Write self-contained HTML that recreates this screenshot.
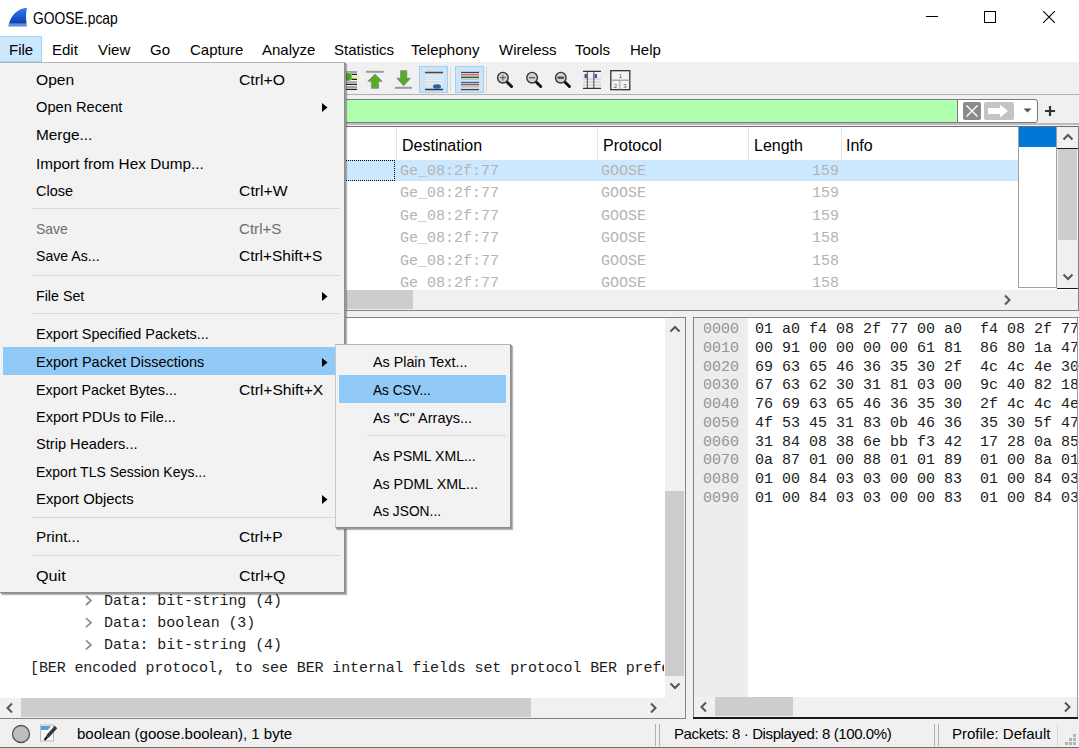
<!DOCTYPE html>
<html><head><meta charset="utf-8">
<style>
*{margin:0;padding:0;box-sizing:border-box}
html,body{width:1079px;height:748px;overflow:hidden;background:#fff}
body{position:relative;font-family:"Liberation Sans",sans-serif;font-size:15px;color:#000}
.a{position:absolute}
.t{position:absolute;white-space:nowrap;line-height:20px;transform-origin:0 0}
.m{font-family:"Liberation Mono",monospace;font-size:15px;color:#1c1c1c}
.tr{letter-spacing:-0.11px}
.mn .t{letter-spacing:0}
.pl{color:#b4b4b4}
.off{color:#949494}
.sep{left:32px;width:308px;height:1px;background:#d7d7d7}
.dis{color:#6d6d6d}
.hd{font-size:16px}
</style></head><body>
<!-- title bar -->
<svg class="a" style="left:8px;top:7px" width="20" height="20" viewBox="0 0 20 20">
 <defs><linearGradient id="fin" x1="0" y1="0" x2="0" y2="1"><stop offset="0" stop-color="#2f7ee8"/><stop offset="0.8" stop-color="#1140b8"/><stop offset="0.86" stop-color="#6a92d8"/><stop offset="1" stop-color="#5b86cf"/></linearGradient></defs>
 <path d="M19 0.8C10 1.5 2.5 8 0.2 19.6L19 19.6C17.8 13 17.6 6 19 0.8Z" fill="url(#fin)"/>
</svg>
<div class="t" style="left:33px;top:8px;font-size:16.5px;transform:scaleX(0.84)">GOOSE.pcap</div>
<div class="a" style="left:926px;top:16px;width:12px;height:1px;background:#000"></div>
<div class="a" style="left:984px;top:11px;width:12px;height:12px;border:1px solid #000"></div>
<svg class="a" style="left:1043px;top:11px" width="12" height="12"><path d="M0 0L12 12M12 0L0 12" stroke="#000" stroke-width="1.1"/></svg>

<!-- menubar -->
<div class="a" style="left:0;top:36px;width:42px;height:26px;background:#cce8ff;border:1px solid #a4d4fa;border-left:none"></div>
<div class="t" style="left:9px;top:40px">File</div>
<div class="t" style="left:52px;top:40px">Edit</div>
<div class="t" style="left:98px;top:40px">View</div>
<div class="t" style="left:150px;top:40px">Go</div>
<div class="t" style="left:190px;top:40px">Capture</div>
<div class="t" style="left:262px;top:40px">Analyze</div>
<div class="t" style="left:334px;top:40px">Statistics</div>
<div class="t" style="left:411px;top:40px">Telephony</div>
<div class="t" style="left:499px;top:40px">Wireless</div>
<div class="t" style="left:575px;top:40px">Tools</div>
<div class="t" style="left:630px;top:40px">Help</div>

<!-- toolbar -->
<div class="a" style="left:0;top:62px;width:1079px;height:33px;background:#f0f0f0;border-bottom:1px solid #b0b0b0"></div>
<svg class="a" style="left:340px;top:62px" width="310" height="33">
 <!-- partial icon (go to packet) -->
 <path d="M5.3 12.4H17M5.3 17.3H17M5.3 22.4H17M5.3 27.4H17" stroke="#1e1e1e" stroke-width="1.4"/>
 <path d="M5.3 10H17M5.3 20.1H17M5.3 25H17" stroke="#8a8a8a" stroke-width="1.4"/>
 <circle cx="7.7" cy="14.9" r="4.3" fill="#4aa520" stroke="#b8e0a0" stroke-width="0.8"/>
 <path d="M12.5 15.4H19" stroke="#eef080" stroke-width="2.2"/>
 <!-- first packet -->
 <path d="M26 9.8H43.7" stroke="#9a9a9a" stroke-width="2"/>
 <path d="M35 12.2L42.2 19.3H38.6V26.3H31.4V19.3H27.8Z" fill="#52b020" stroke="#8a8a8a" stroke-width="0.9"/>
 <!-- last packet -->
 <path d="M55 25.8H72" stroke="#9a9a9a" stroke-width="2"/>
 <path d="M63.7 23.7L70.6 16.3H66.8V8.7H60.6V16.3H56.8Z" fill="#52b020" stroke="#8a8a8a" stroke-width="0.9"/>
 <!-- autoscroll button -->
 <rect x="79.5" y="4.5" width="28" height="26" fill="#cce4f7" stroke="#a6cdeb"/>
 <path d="M85 10.5H103" stroke="#444" stroke-width="1.5"/>
 <path d="M85 13.5H103M85 16H103M85 18.5H103M85 21.5H103M85 24H103" stroke="#f4ecdc" stroke-width="1"/>
 <path d="M85 27.5H103" stroke="#333" stroke-width="1.5"/>
 <ellipse cx="97" cy="24.5" rx="4" ry="2.2" fill="#2a5ea8"/>
 <path d="M110.5 5V30" stroke="#d8d8d8"/>
 <!-- colorize button -->
 <rect x="115.5" y="4.5" width="28" height="26" fill="#cce4f7" stroke="#a6cdeb"/>
 <path d="M121 10.5H139" stroke="#444" stroke-width="1.3"/>
 <path d="M121 12.8H139" stroke="#e06050" stroke-width="1.3"/>
 <path d="M121 15.3H139" stroke="#445" stroke-width="1.3"/>
 <path d="M121 17.3H139" stroke="#a8d890" stroke-width="1.3"/>
 <path d="M121 20.5H139" stroke="#556" stroke-width="1.3"/>
 <path d="M121 22.6H139" stroke="#7a5a8a" stroke-width="1.3"/>
 <path d="M121 24.7H139" stroke="#d8c070" stroke-width="1.3"/>
 <path d="M121 27.6H139" stroke="#444" stroke-width="1.3"/>
 <path d="M146.5 5V30" stroke="#d8d8d8"/>
 <!-- zoom in/out/normal -->
 <g stroke="#333" fill="#d0d0d0" stroke-width="1.4">
  <circle cx="162.9" cy="15.7" r="5.3"/>
  <circle cx="192.1" cy="15.7" r="5.3"/>
  <circle cx="220.8" cy="15.7" r="5.3"/>
 </g>
 <g stroke="#111" stroke-width="3" stroke-linecap="round">
  <path d="M167.5 20.5L171.5 24.5M196.7 20.5L200.7 24.5M225.4 20.5L229.4 24.5"/>
 </g>
 <path d="M160 15.7H166M162.9 12.8V18.6" stroke="#555" stroke-width="1"/>
 <path d="M189 15.7H195" stroke="#555" stroke-width="1.2"/>
 <path d="M217.5 15.7H224" stroke="#444" stroke-width="2.2"/>
 <!-- resize columns -->
 <path d="M243 9.4H261M243 26.4H261" stroke="#333" stroke-width="1.2"/>
 <path d="M243 17H261M243 20H261M243 23H261" stroke="#c8c8c8" stroke-width="1"/>
 <path d="M247.3 9.4V26.4M253.8 9.4V26.4" stroke="#333" stroke-width="0.9"/>
 <rect x="244.5" y="12" width="2.5" height="4" fill="#3a5a9a"/>
 <rect x="254.5" y="12" width="2.5" height="4" fill="#3a5a9a"/>
 <!-- layout -->
 <rect x="270.8" y="8.7" width="19" height="19" fill="#f4f4f4" stroke="#222" stroke-width="1.2"/>
 <path d="M270.8 18.2H289.8" stroke="#999" stroke-width="1.2"/>
 <path d="M279.9 18.2V27.7" stroke="#999" stroke-width="1"/>
 <text x="280.3" y="16" font-size="6" text-anchor="middle" fill="#555" font-family="Liberation Sans">1</text>
 <text x="275.5" y="25.5" font-size="6" text-anchor="middle" fill="#555" font-family="Liberation Sans">2</text>
 <text x="285" y="25.5" font-size="6" text-anchor="middle" fill="#555" font-family="Liberation Sans">3</text>
</svg>

<!-- filter bar -->
<div class="a" style="left:0;top:95px;width:1079px;height:31px;background:#f0f0f0"></div>
<div class="a" style="left:0;top:99px;width:1038px;height:24px;background:#fff;border:1px solid #7a7a7a;border-radius:3px"></div>
<div class="a" style="left:1px;top:100px;width:957px;height:22px;background:#afffaf;border-right:1px solid #7a7a7a"></div>
<div class="a" style="left:0;top:123px;width:1079px;height:2px;background:#bdbac0"></div>
<svg class="a" style="left:962px;top:101px" width="60" height="20">
 <rect x="1" y="1" width="18" height="18" rx="2" fill="#8a8a8a"/>
 <path d="M4.5 4.5L15.5 15.5M15.5 4.5L4.5 15.5" stroke="#fff" stroke-width="1.4"/>
 <rect x="22" y="1" width="30" height="18" rx="2" fill="#c4c4c4"/>
 <path d="M26 7H38V3.5L46 10L38 16.5V13H26Z" fill="#fff"/>
</svg>
<svg class="a" style="left:1022px;top:107px" width="12" height="8"><path d="M1.5 1.5H9.5L5.5 5.5Z" fill="#555"/></svg>
<svg class="a" style="left:1043px;top:104px" width="14" height="14"><path d="M7 2V12M2 7H12" stroke="#333" stroke-width="2.2"/></svg>

<!-- packet list -->
<div class="a" style="left:0;top:126px;width:1079px;height:1px;background:#6e6e6e"></div>
<div class="a" style="left:1019px;top:127px;width:37px;height:20px;background:#0078d7"></div>
<div class="a" style="left:1018px;top:127px;width:39px;height:161px;border:1px solid #a0a0a0;border-top:none"></div>
<div class="a" style="left:396px;top:127px;width:1px;height:33px;background:#e5e5e5"></div>
<div class="a" style="left:597px;top:127px;width:1px;height:33px;background:#e5e5e5"></div>
<div class="a" style="left:748px;top:127px;width:1px;height:33px;background:#e5e5e5"></div>
<div class="a" style="left:841px;top:127px;width:1px;height:33px;background:#e5e5e5"></div>
<div class="t hd" style="left:402px;top:136px">Destination</div>
<div class="t hd" style="left:603px;top:136px">Protocol</div>
<div class="t hd" style="left:754px;top:136px">Length</div>
<div class="t hd" style="left:846px;top:136px">Info</div>
<div class="a" style="left:0;top:160px;width:1018px;height:21px;background:#cce8ff"></div>
<div class="a" style="left:340px;top:160px;width:55px;height:21px;border:1px dotted #000;border-left:none"></div>
<div class="a" style="left:0;top:127px;width:1018px;height:160px;overflow:hidden"><div class="t m pl" style="left:400px;top:35px">Ge_08:2f:77</div>
<div class="t m pl" style="left:601px;top:35px">GOOSE</div>
<div class="t m pl" style="left:812px;top:35px;width:27px;text-align:right">159</div>
<div class="t m pl" style="left:400px;top:57px">Ge_08:2f:77</div>
<div class="t m pl" style="left:601px;top:57px">GOOSE</div>
<div class="t m pl" style="left:812px;top:57px;width:27px;text-align:right">159</div>
<div class="t m pl" style="left:400px;top:80px">Ge_08:2f:77</div>
<div class="t m pl" style="left:601px;top:80px">GOOSE</div>
<div class="t m pl" style="left:812px;top:80px;width:27px;text-align:right">159</div>
<div class="t m pl" style="left:400px;top:102px">Ge_08:2f:77</div>
<div class="t m pl" style="left:601px;top:102px">GOOSE</div>
<div class="t m pl" style="left:812px;top:102px;width:27px;text-align:right">158</div>
<div class="t m pl" style="left:400px;top:125px">Ge_08:2f:77</div>
<div class="t m pl" style="left:601px;top:125px">GOOSE</div>
<div class="t m pl" style="left:812px;top:125px;width:27px;text-align:right">158</div>
<div class="t m pl" style="left:400px;top:147px">Ge_08:2f:77</div>
<div class="t m pl" style="left:601px;top:147px">GOOSE</div>
<div class="t m pl" style="left:812px;top:147px;width:27px;text-align:right">158</div></div>
<!-- packet list v-scroll -->
<div class="a" style="left:1057px;top:127px;width:21px;height:161px;background:#f0f0f0"></div>
<div class="a" style="left:1058px;top:149px;width:19px;height:91px;background:#cdcdcd"></div>
<div class="a" style="left:1057px;top:148px;width:21px;height:1px;background:#1a1a1a"></div>
<div class="a" style="left:1057px;top:288px;width:21px;height:1px;background:#1a1a1a"></div>
<svg class="a" style="left:1061px;top:131px" width="14" height="12"><path d="M2.5 8.5L7 4L11.5 8.5" fill="none" stroke="#555" stroke-width="2"/></svg>
<svg class="a" style="left:1061px;top:271px" width="14" height="12"><path d="M2.5 3.5L7 8L11.5 3.5" fill="none" stroke="#555" stroke-width="2"/></svg>
<!-- packet list h-scroll -->
<div class="a" style="left:0;top:290px;width:1078px;height:20px;background:#f0f0f0"></div>
<div class="a" style="left:0;top:290px;width:413px;height:19px;background:#cdcdcd"></div>
<svg class="a" style="left:1000px;top:293px" width="14" height="14"><path d="M5 2.5L9.5 7L5 11.5" fill="none" stroke="#555" stroke-width="2"/></svg>
<div class="a" style="left:1078px;top:126px;width:1px;height:184px;background:#808080"></div>

<!-- splitter -->
<div class="a" style="left:0;top:310px;width:1079px;height:7px;background:#f0f0f0;border-top:1px solid #858585"></div>
<div class="a" style="left:686px;top:317px;width:7px;height:402px;background:#f0f0f0"></div>

<!-- details pane -->
<div class="a" style="left:0;top:317px;width:686px;height:402px;background:#fff;border-top:1px solid #858585;border-right:1px solid #858585"></div>
<div class="a" style="left:665px;top:318px;width:20px;height:380px;background:#f0f0f0"></div>
<div class="a" style="left:665px;top:491px;width:19px;height:185px;background:#cdcdcd"></div>
<svg class="a" style="left:668px;top:323px" width="14" height="12"><path d="M2.5 8.5L7 4L11.5 8.5" fill="none" stroke="#555" stroke-width="2"/></svg>
<svg class="a" style="left:668px;top:680px" width="14" height="12"><path d="M2.5 3.5L7 8L11.5 3.5" fill="none" stroke="#555" stroke-width="2"/></svg>
<div class="a" style="left:0;top:698px;width:685px;height:20px;background:#f0f0f0"></div>
<div class="a" style="left:21px;top:698px;width:510px;height:19px;background:#cdcdcd"></div>
<svg class="a" style="left:3px;top:701px" width="14" height="14"><path d="M9 2.5L4.5 7L9 11.5" fill="none" stroke="#555" stroke-width="2"/></svg>
<svg class="a" style="left:646px;top:701px" width="14" height="14"><path d="M5 2.5L9.5 7L5 11.5" fill="none" stroke="#555" stroke-width="2"/></svg>
<div class="a" style="left:0;top:718px;width:686px;height:1px;background:#828282"></div>
<svg class="a" style="left:84px;top:594px" width="10" height="60"><path d="M2 2L7 6.5L2 11M2 24.2L7 28.7L2 33.2M2 46.4L7 50.9L2 55.4" fill="none" stroke="#8c8c8c" stroke-width="1.7"/></svg>
<div class="t m tr" style="left:104px;top:592px">Data:&nbsp;bit-string&nbsp;(4)</div>
<div class="t m tr" style="left:104px;top:614px">Data:&nbsp;boolean&nbsp;(3)</div>
<div class="t m tr" style="left:104px;top:636px">Data:&nbsp;bit-string&nbsp;(4)</div>
<div class="a" style="left:0;top:657px;width:664px;height:26px;overflow:hidden"><div class="t m tr" style="left:30px;top:2px">[BER&nbsp;encoded&nbsp;protocol,&nbsp;to&nbsp;see&nbsp;BER&nbsp;internal&nbsp;fields&nbsp;set&nbsp;protocol&nbsp;BER&nbsp;preferences]</div></div>

<!-- bytes pane -->
<div class="a" style="left:693px;top:317px;width:386px;height:402px;background:#fff;border-top:1px solid #858585;border-left:1px solid #858585"></div>
<div class="a" style="left:694px;top:318px;width:54px;height:380px;background:#ededed"></div>
<div class="t m off" style="left:703px;top:320px">0000</div>
<div class="t m" style="left:755px;top:320px">01&nbsp;a0&nbsp;f4&nbsp;08&nbsp;2f&nbsp;77&nbsp;00&nbsp;a0&nbsp;&nbsp;f4&nbsp;08&nbsp;2f&nbsp;77</div>
<div class="t m off" style="left:703px;top:339px">0010</div>
<div class="t m" style="left:755px;top:339px">00&nbsp;91&nbsp;00&nbsp;00&nbsp;00&nbsp;00&nbsp;61&nbsp;81&nbsp;&nbsp;86&nbsp;80&nbsp;1a&nbsp;47</div>
<div class="t m off" style="left:703px;top:358px">0020</div>
<div class="t m" style="left:755px;top:358px">69&nbsp;63&nbsp;65&nbsp;46&nbsp;36&nbsp;35&nbsp;30&nbsp;2f&nbsp;&nbsp;4c&nbsp;4c&nbsp;4e&nbsp;30</div>
<div class="t m off" style="left:703px;top:376px">0030</div>
<div class="t m" style="left:755px;top:376px">67&nbsp;63&nbsp;62&nbsp;30&nbsp;31&nbsp;81&nbsp;03&nbsp;00&nbsp;&nbsp;9c&nbsp;40&nbsp;82&nbsp;18</div>
<div class="t m off" style="left:703px;top:395px">0040</div>
<div class="t m" style="left:755px;top:395px">76&nbsp;69&nbsp;63&nbsp;65&nbsp;46&nbsp;36&nbsp;35&nbsp;30&nbsp;&nbsp;2f&nbsp;4c&nbsp;4c&nbsp;4e</div>
<div class="t m off" style="left:703px;top:414px">0050</div>
<div class="t m" style="left:755px;top:414px">4f&nbsp;53&nbsp;45&nbsp;31&nbsp;83&nbsp;0b&nbsp;46&nbsp;36&nbsp;&nbsp;35&nbsp;30&nbsp;5f&nbsp;47</div>
<div class="t m off" style="left:703px;top:433px">0060</div>
<div class="t m" style="left:755px;top:433px">31&nbsp;84&nbsp;08&nbsp;38&nbsp;6e&nbsp;bb&nbsp;f3&nbsp;42&nbsp;&nbsp;17&nbsp;28&nbsp;0a&nbsp;85</div>
<div class="t m off" style="left:703px;top:451px">0070</div>
<div class="t m" style="left:755px;top:451px">0a&nbsp;87&nbsp;01&nbsp;00&nbsp;88&nbsp;01&nbsp;01&nbsp;89&nbsp;&nbsp;01&nbsp;00&nbsp;8a&nbsp;01</div>
<div class="t m off" style="left:703px;top:470px">0080</div>
<div class="t m" style="left:755px;top:470px">01&nbsp;00&nbsp;84&nbsp;03&nbsp;03&nbsp;00&nbsp;00&nbsp;83&nbsp;&nbsp;01&nbsp;00&nbsp;84&nbsp;03</div>
<div class="t m off" style="left:703px;top:489px">0090</div>
<div class="t m" style="left:755px;top:489px">01&nbsp;00&nbsp;84&nbsp;03&nbsp;03&nbsp;00&nbsp;00&nbsp;83&nbsp;&nbsp;01&nbsp;00&nbsp;84&nbsp;03</div>
<div class="a" style="left:694px;top:697px;width:385px;height:20px;background:#f0f0f0"></div>
<div class="a" style="left:715px;top:697px;width:78px;height:19px;background:#cdcdcd"></div>
<svg class="a" style="left:697px;top:700px" width="14" height="14"><path d="M9 2.5L4.5 7L9 11.5" fill="none" stroke="#555" stroke-width="2"/></svg>
<svg class="a" style="left:1060px;top:700px" width="14" height="14"><path d="M5 2.5L9.5 7L5 11.5" fill="none" stroke="#555" stroke-width="2"/></svg>
<div class="a" style="left:693px;top:717px;width:385px;height:2px;background:#1a1a1a"></div>
<div class="a" style="left:1077px;top:318px;width:1px;height:399px;background:#9a9a9a"></div>

<!-- status bar -->
<div class="a" style="left:0;top:719px;width:1079px;height:29px;background:#f0f0f0"></div>
<div class="a" style="left:0;top:747px;width:1079px;height:1px;background:#6d6d6d"></div>
<svg class="a" style="left:11px;top:724px" width="20" height="20"><circle cx="10" cy="10" r="8.5" fill="#bdbdbd" stroke="#555" stroke-width="1.3"/></svg>
<svg class="a" style="left:39px;top:723px" width="20" height="20">
 <rect x="1.5" y="2" width="13" height="16" fill="#f8f8f8" stroke="#bbb"/>
 <path d="M2 3H12L9 7H2Z" fill="#5aa0d8"/>
 <path d="M8.5 13.5L17 4" stroke="#3a3a3a" stroke-width="3.4"/>
 <path d="M5.5 17L8.5 13.5" stroke="#111" stroke-width="2"/>
</svg>
<div class="t" style="left:77px;top:724px">boolean (goose.boolean), 1 byte</div>
<div class="a" style="left:655px;top:724px;width:1px;height:22px;background:#b0b0b0"></div>
<div class="a" style="left:659px;top:724px;width:1px;height:22px;background:#b0b0b0"></div>
<div class="t" style="left:674px;top:724px;letter-spacing:-0.4px">Packets: 8 · Displayed: 8 (100.0%)</div>
<div class="a" style="left:934px;top:724px;width:1px;height:22px;background:#b0b0b0"></div>
<div class="a" style="left:938px;top:724px;width:1px;height:22px;background:#b0b0b0"></div>
<div class="t" style="left:952px;top:724px">Profile: Default</div>
<div class="a" style="left:1057px;top:724px;width:1px;height:22px;background:#d8d8d8"></div>
<svg class="a" style="left:1064px;top:733px" width="14" height="14"><g fill="#b4b4b4"><rect x="9" y="1" width="3" height="3"/><rect x="5" y="5" width="3" height="3"/><rect x="9" y="5" width="3" height="3"/><rect x="1" y="9" width="3" height="3"/><rect x="5" y="9" width="3" height="3"/><rect x="9" y="9" width="3" height="3"/></g></svg>

<!-- File menu -->
<div class="a" style="left:0;top:62px;width:345px;height:531px;background:#f2f2f2;border-top:1px solid #b4b4b4;border-right:1px solid #8e8e8e;border-bottom:1px solid #8e8e8e;box-shadow:1px 1px 0 #999,2px 2px 1px rgba(0,0,0,.28)"></div>
<div class="a" style="left:3px;top:347px;width:332px;height:28px;background:#91c9f7"></div>
<div class="mn"><div class="t" style="left:36px;top:70px;transform:scaleX(1.041)">Open</div>
<div class="t" style="left:239px;top:70px;transform:scaleX(1.048)">Ctrl+O</div>
<div class="t" style="left:36px;top:97px;transform:scaleX(0.977)">Open Recent</div>
<svg class="a" style="left:322px;top:103px" width="6" height="9"><path d="M0 0L5.5 4.5L0 9Z"/></svg>
<div class="t" style="left:36px;top:125px;transform:scaleX(1.023)">Merge...</div>
<div class="t" style="left:36px;top:154px;transform:scaleX(1.022)">Import from Hex Dump...</div>
<div class="t" style="left:36px;top:181px;transform:scaleX(0.967)">Close</div>
<div class="t" style="left:239px;top:181px;transform:scaleX(1.051)">Ctrl+W</div>
<div class="a sep" style="top:208px"></div>
<div class="t dis" style="left:36px;top:219px;transform:scaleX(0.932)">Save</div>
<div class="t dis" style="left:239px;top:219px;transform:scaleX(1.007)">Ctrl+S</div>
<div class="t" style="left:36px;top:246px;transform:scaleX(0.941)">Save As...</div>
<div class="t" style="left:239px;top:246px;transform:scaleX(1.029)">Ctrl+Shift+S</div>
<div class="a sep" style="top:275px"></div>
<div class="t" style="left:36px;top:286px;transform:scaleX(0.949)">File Set</div>
<svg class="a" style="left:322px;top:292px" width="6" height="9"><path d="M0 0L5.5 4.5L0 9Z"/></svg>
<div class="a sep" style="top:313px"></div>
<div class="t" style="left:36px;top:324px;transform:scaleX(0.964)">Export Specified Packets...</div>
<div class="t" style="left:36px;top:352px;transform:scaleX(0.966)">Export Packet Dissections</div>
<svg class="a" style="left:322px;top:358px" width="6" height="9"><path d="M0 0L5.5 4.5L0 9Z"/></svg>
<div class="t" style="left:36px;top:380px;transform:scaleX(0.955)">Export Packet Bytes...</div>
<div class="t" style="left:239px;top:380px;transform:scaleX(1.042)">Ctrl+Shift+X</div>
<div class="t" style="left:36px;top:407px;transform:scaleX(0.97)">Export PDUs to File...</div>
<div class="t" style="left:36px;top:434px;transform:scaleX(0.974)">Strip Headers...</div>
<div class="t" style="left:36px;top:462px;transform:scaleX(0.933)">Export TLS Session Keys...</div>
<div class="t" style="left:36px;top:489px;transform:scaleX(0.992)">Export Objects</div>
<svg class="a" style="left:322px;top:495px" width="6" height="9"><path d="M0 0L5.5 4.5L0 9Z"/></svg>
<div class="a sep" style="top:517px"></div>
<div class="t" style="left:36px;top:527px;transform:scaleX(1.017)">Print...</div>
<div class="t" style="left:239px;top:527px;transform:scaleX(1.033)">Ctrl+P</div>
<div class="a sep" style="top:555px"></div>
<div class="t" style="left:36px;top:566px;transform:scaleX(1.08)">Quit</div>
<div class="t" style="left:239px;top:566px;transform:scaleX(1.062)">Ctrl+Q</div></div>

<!-- submenu -->
<div class="a" style="left:335px;top:344px;width:176px;height:184px;background:#f2f2f2;border-top:1px solid #b4b4b4;border-left:1px solid #c8c8c8;border-right:1px solid #8e8e8e;border-bottom:1px solid #8e8e8e;box-shadow:1px 1px 0 #999,2px 2px 1px rgba(0,0,0,.28)"></div>
<div class="a" style="left:339px;top:375px;width:167px;height:28px;background:#91c9f7"></div>
<div class="mn"><div class="t" style="left:373px;top:352px;transform:scaleX(0.954)">As Plain Text...</div>
<div class="t" style="left:373px;top:380px;transform:scaleX(0.91)">As CSV...</div>
<div class="t" style="left:373px;top:408px;transform:scaleX(0.969)">As &quot;C&quot; Arrays...</div>
<div class="a" style="left:367px;top:435px;width:139px;height:1px;background:#d7d7d7"></div>
<div class="t" style="left:373px;top:446px;transform:scaleX(0.938)">As PSML XML...</div>
<div class="t" style="left:373px;top:474px;transform:scaleX(0.951)">As PDML XML...</div>
<div class="t" style="left:373px;top:501px;transform:scaleX(0.917)">As JSON...</div></div>
</body></html>
